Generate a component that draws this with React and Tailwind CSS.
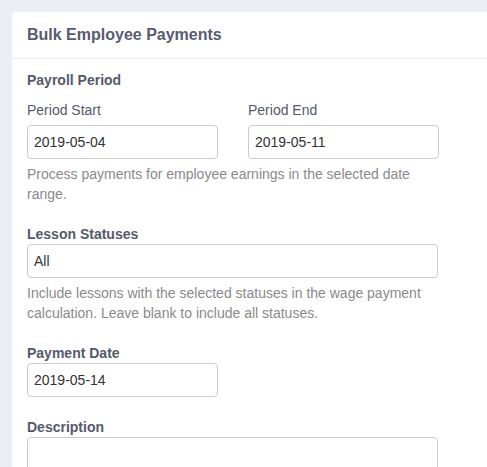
import React from "react";

const Field = ({ value, wide }) => (
  <div
    className={`h-[34px] ${wide ? "w-[411px]" : "w-[191px]"} border border-[#cccccc] rounded-[4px] bg-white px-[6px] flex items-center text-[14px] text-[#333333]`}
  >
    {value}
  </div>
);

const Help = ({ children }) => (
  <p className="mt-[5px] w-[411px] text-[14px] leading-[20px] text-[#8a8a8a]">{children}</p>
);

const App = () => {
  return (
    <div
      className="min-h-screen bg-[#eceef3] pl-[12px] pt-[12px] overflow-hidden"
      style={{ fontFamily: '"Liberation Sans", Arial, sans-serif' }}
    >
      <div className="bg-white rounded-tl-[4px] w-[520px] h-[470px]">
        {/* Header */}
        <div className="h-[47px] px-[15px] flex items-center border-b border-[#e8e9ee]">
          <h1 className="text-[16px] font-bold text-[#575c6e]">Bulk Employee Payments</h1>
        </div>

        {/* Body */}
        <div className="px-[15px] pt-[11px]">
          <h2 className="text-[14px] leading-[20px] font-bold text-[#555a6a]">Payroll Period</h2>

          <div className="mt-[10px] flex gap-[30px]">
            <div>
              <div className="text-[14px] leading-[20px] text-[#555a6a] mb-[5px]">Period Start</div>
              <Field value="2019-05-04" />
            </div>
            <div>
              <div className="text-[14px] leading-[20px] text-[#555a6a] mb-[5px]">Period End</div>
              <Field value="2019-05-11" />
            </div>
          </div>
          <Help>Process payments for employee earnings in the selected date range.</Help>

          <div className="mt-[20px] text-[14px] leading-[20px] font-bold text-[#555a6a]">Lesson Statuses</div>
          <Field value="All" wide />
          <Help>
            Include lessons with the selected statuses in the wage payment calculation. Leave blank to include all
            statuses.
          </Help>

          <div className="mt-[20px] text-[14px] leading-[20px] font-bold text-[#555a6a]">Payment Date</div>
          <Field value="2019-05-14" />

          <div className="mt-[20px] text-[14px] leading-[20px] font-bold text-[#555a6a]">Description</div>
          <div className="w-[411px] h-[60px] border border-[#cccccc] rounded-[4px] bg-white" />
        </div>
      </div>
    </div>
  );
};

export default App;
